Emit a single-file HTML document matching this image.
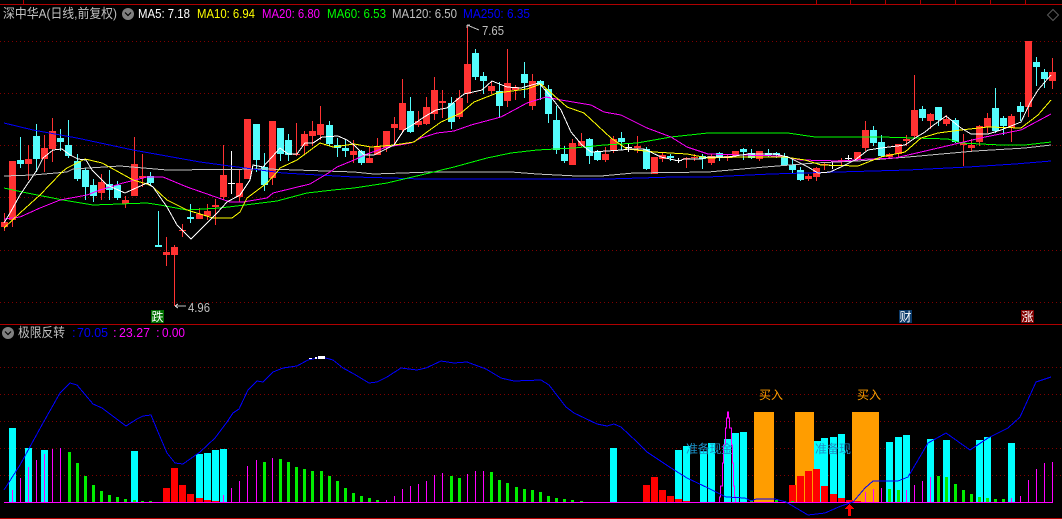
<!DOCTYPE html>
<html>
<head>
<meta charset="utf-8">
<style>
html,body{margin:0;padding:0;background:#000;width:1062px;height:519px;overflow:hidden}
svg{display:block;position:absolute;left:0;top:0}
text{font-family:"Liberation Sans","WenQuanYi Zen Hei","Noto Sans CJK SC",sans-serif;font-size:13px}
.z{font-family:"WenQuanYi Zen Hei","Noto Sans CJK SC",sans-serif;font-size:12px}
</style>
</head>
<body>
<svg width="1062" height="519" viewBox="0 0 1062 519" xmlns="http://www.w3.org/2000/svg">
<rect width="1062" height="519" fill="#000"/>
<g shape-rendering="crispEdges" fill="none">
<path d="M0 4.5H1062M23.5 0V4M816.5 0V4M850.5 0V4M885.5 0V4M920.5 0V4M955.5 0V4M990.5 0V4M1025.5 0V4M0 324.5H1062M0 518.5H1062" stroke="#b00000"/>
<path d="M0 41.5H1062M0 93.5H1062M0 145.5H1062M0 197.5H1062M0 250.5H1062M0 302.5H1062M0 367.5H1062M0 394.5H1062M0 421.5H1062M0 448.5H1062M0 475.5H1062" stroke="#800000" stroke-dasharray="1 3"/>

<!-- red wicks -->
<path stroke="#ff3232" d="M4.5 213V231M12.5 161V227M28.5 145V180M44.5 135V172M52.5 118V162M101.5 174V200M125.5 196V208M134.5 137V196M142.5 154V187M166.5 237V266M174.5 245V306M182.5 224V237M199.5 208V219M207.5 204V220M215.5 199V225M223.5 145V200M239.5 170V202M247.5 119V179M272.5 121V185M296.5 123V156M304.5 131V155M312.5 121V146M320.5 106V140M353.5 140V163M369.5 147V163M377.5 138V155M386.5 131V152M394.5 117V146M402.5 79V133M418.5 111V127M426.5 97V125M434.5 77V120M442.5 90V118M459.5 90V119M467.5 25V103M491.5 81V94M507.5 49V107M515.5 85V100M532.5 74V110M572.5 139V165M581.5 133V147M605.5 147V162M613.5 136V153M637.5 136V153M654.5 157V174M662.5 152V162M686.5 157V168M694.5 154V161M711.5 154V165M727.5 155V161M735.5 151V157M759.5 151V161M808.5 174V181M816.5 167V181M824.5 163V170M841.5 158V166M857.5 152V160M865.5 121V151M889.5 153V158M898.5 144V157M906.5 135V146M914.5 75V139M930.5 113V129M946.5 115V126M963.5 134V166M971.5 139V152M979.5 125V146M987.5 113V133M1011.5 114V142M1028.5 41V117M1052.5 58V89"/>
<!-- cyan wicks -->
<path stroke="#54fcfc" d="M20.5 137V168M36.5 124V172M60.5 129V151M68.5 120V158M77.5 154V181M85.5 168V200M93.5 179V202M109.5 170V200M117.5 181V200M150.5 172V185M158.5 211V245M190.5 204V223M256.5 124V172M264.5 153V191M280.5 128V161M288.5 134V161M329.5 121V146M337.5 138V157M345.5 140V157M361.5 150V165M410.5 97V133M451.5 97V129M475.5 49V80M483.5 72V94M499.5 82V118M524.5 62V98M540.5 80V100M548.5 85V123M556.5 106V154M564.5 146V163M589.5 138V164M597.5 150V161M621.5 132V150M646.5 147V170M670.5 154V161M702.5 154V169M719.5 152V161M743.5 148V160M751.5 149V159M768.5 149V157M776.5 152V158M784.5 153V166M792.5 158V174M800.5 167V181M873.5 126V146M881.5 135V157M922.5 106V121M938.5 107V126M955.5 118V143M995.5 88V133M1003.5 116V135M1020.5 102V121M1036.5 57V86M1044.5 69V88"/>
<!-- white crosses -->
<path stroke="#fff" d="M231.5 151V194M228 183.5H235M628.5 143V152M625 147.5H632M678.5 158V163M675 160.5H682M832.5 162V169M829 165.5H836M848.5 155V162M845 158.5H852"/>
<!-- red bodies -->
<path fill="#ff3232" d="M1 222h7v5h-7zM9 161h7v59h-7zM25 159h7v5h-7zM41 148h7v11h-7zM49 131h7v18h-7zM98 182h7v11h-7zM122 200h7v4h-7zM131 164h7v32h-7zM139 176h7v2h-7zM163 252h7v3h-7zM171 247h7v8h-7zM179 230h7v1h-7zM196 214h7v5h-7zM204 211h7v5h-7zM212 205h7v2h-7zM220 175h7v22h-7zM236 183h7v14h-7zM244 119h7v60h-7zM269 121h7v57h-7zM293 154h7v1h-7zM301 134h7v12h-7zM309 131h7v5h-7zM317 124h7v11h-7zM350 151h7v4h-7zM366 158h7v5h-7zM374 146h7v9h-7zM383 131h7v17h-7zM391 124h7v4h-7zM399 103h7v27h-7zM415 121h7v4h-7zM423 107h7v17h-7zM431 90h7v24h-7zM439 101h7v2h-7zM456 98h7v19h-7zM464 64h7v30h-7zM488 86h7v5h-7zM504 83h7v18h-7zM512 87h7v3h-7zM529 81h7v25h-7zM569 143h7v22h-7zM578 141h7v5h-7zM602 154h7v6h-7zM610 139h7v11h-7zM634 146h7v2h-7zM651 157h7v17h-7zM659 155h7v4h-7zM683 158h7v1h-7zM691 157h7v1h-7zM708 156h7v7h-7zM724 156h7v2h-7zM732 151h7v5h-7zM756 151h7v8h-7zM805 176h7v3h-7zM813 168h7v9h-7zM821 164h7v1h-7zM838 160h7v1h-7zM854 152h7v7h-7zM862 130h7v18h-7zM886 154h7v3h-7zM895 144h7v10h-7zM903 139h7v2h-7zM911 110h7v26h-7zM927 114h7v7h-7zM943 119h7v5h-7zM960 143h7v2h-7zM968 145h7v3h-7zM976 126h7v16h-7zM984 118h7v9h-7zM1008 116h7v12h-7zM1025 41h7v66h-7zM1049 72h7v9h-7z"/>
<!-- cyan bodies -->
<path fill="#54fcfc" d="M17 160h7v4h-7zM33 136h7v23h-7zM57 138h7v4h-7zM65 145h7v11h-7zM74 161h7v18h-7zM82 170h7v17h-7zM90 185h7v11h-7zM106 184h7v6h-7zM114 185h7v13h-7zM147 176h7v7h-7zM155 245h7v2h-7zM187 217h7v2h-7zM253 124h7v36h-7zM261 167h7v18h-7zM277 128h7v26h-7zM285 140h7v15h-7zM326 125h7v19h-7zM334 145h7v3h-7zM342 148h7v3h-7zM358 151h7v12h-7zM407 111h7v21h-7zM448 103h7v19h-7zM472 53h7v24h-7zM480 76h7v5h-7zM496 91h7v15h-7zM521 74h7v9h-7zM537 81h7v4h-7zM545 89h7v25h-7zM553 120h7v30h-7zM561 154h7v7h-7zM586 139h7v17h-7zM594 152h7v8h-7zM618 138h7v4h-7zM643 149h7v20h-7zM667 156h7v2h-7zM699 156h7v3h-7zM716 153h7v5h-7zM740 149h7v3h-7zM748 153h7v5h-7zM765 153h7v2h-7zM773 153h7v2h-7zM781 156h7v9h-7zM789 165h7v5h-7zM797 170h7v10h-7zM870 130h7v13h-7zM878 142h7v14h-7zM919 109h7v9h-7zM935 107h7v13h-7zM952 120h7v22h-7zM992 108h7v23h-7zM1000 118h7v8h-7zM1017 106h7v6h-7zM1033 62h7v5h-7zM1041 72h7v7h-7z"/>

<!-- MA lines -->
<polyline stroke="#c0c0c0" stroke-width="1" points="4,176 33,175 67,172 73,169 120,166 167,170 267,169 354,172 374,174 431,172 511,172 537,174 577,176 601,176 634,173 708,172 765,167 815,163 858,161 908,157 975,151 1025,148 1051,145"/>
<polyline stroke="#0000ff" stroke-width="1" points="4,123 33,130 77,138 133,150 200,162 260,170 283,173 354,177 391,178 421,179 511,179 607,179 674,177 708,177 771,174 838,172 908,170 968,167 1015,164 1051,161"/>
<polyline stroke="#00ff00" stroke-width="1" points="4,188 27,193 63,200 93,205 147,203 160,205 187,210 220,208 253,204 277,201 307,193 333,190 354,188 387,183 421,175 454,167 487,158 511,153 537,150 574,148 604,145 637,143 671,137 708,133 788,133 815,137 881,137 948,139 961,143 1001,145 1025,145 1051,142"/>
<polyline stroke="#ff00ff" stroke-width="1" points="4,219 20,217 40,208 60,200 87,195 100,190 123,183 147,177 163,177 187,187 210,195 230,202 243,202 267,198 273,193 310,184 330,172 337,167 354,160 367,154 387,147 411,143 421,138 437,133 454,131 471,125 501,117 527,103 546,97 561,100 591,105 604,112 621,115 647,128 671,137 687,147 708,154 741,155 781,156 801,160 841,161 868,159 895,158 921,152 951,145 985,137 1021,130 1051,114"/>
<polyline stroke="#ffff00" stroke-width="1" points="4,228 20,213 40,195 62,172 67,168 85,159 102,163 115,170 133,180 147,184 153,187 167,200 187,210 213,218 232,218 240,212 247,198 267,183 277,172 280,168 297,160 320,143 333,147 354,144 371,147 394,145 414,142 427,132 441,122 461,113 474,102 497,93 527,89 541,84 567,107 584,113 611,138 627,149 654,152 687,154 708,158 741,157 785,157 805,160 821,165 858,166 881,157 905,152 921,138 938,133 961,130 988,127 1021,128 1038,115 1051,100"/>
<polyline stroke="#ffffff" stroke-width="1" points="4,223 10,213 20,195 37,170 43,158 53,150 62,149 70,155 78,159 86,160 92,170 107,185 125,193 147,183 153,187 167,207 177,225 191,239 200,230 217,213 227,202 240,195 250,180 253,165 263,167 272,157 280,148 288,154 297,154 305,143 313,143 322,137 338,136 347,140 354,145 364,155 374,155 394,145 404,130 414,124 424,117 436,110 447,108 464,94 482,90 492,81 507,87 521,88 539,83 551,97 561,110 571,132 582,145 591,152 607,151 622,150 629,149 644,149 661,157 679,161 684,159 701,159 708,157 728,157 748,154 775,154 788,157 798,162 808,167 818,173 830,172 841,167 855,160 868,150 881,148 905,145 915,138 925,132 931,127 946,116 961,128 971,134 988,134 1001,130 1021,122 1030,103 1038,90 1051,75"/>

<!-- lower panel cyan -->
<path fill="#00ffff" d="M9 428h7v74h-7zM25 448h7v54h-7zM41 450h7v52h-7zM131 451h7v51h-7zM196 454h7v48h-7zM204 453h7v49h-7zM212 450h7v52h-7zM220 449h7v53h-7zM610 448h7v54h-7zM675 450h7v52h-7zM683 446h7v56h-7zM700 451h7v51h-7zM708 443h7v59h-7zM724 439h7v63h-7zM732 433h7v69h-7zM740 432h7v70h-7zM814 441h7v61h-7zM821 438h7v64h-7zM830 437h7v65h-7zM838 434h7v68h-7zM886 442h7v60h-7zM895 437h7v65h-7zM903 435h7v67h-7zM927 439h7v63h-7zM943 440h7v62h-7zM976 440h7v62h-7zM984 437h7v65h-7zM1008 443h7v59h-7z"/>
<!-- orange -->
<path fill="#ff9d00" d="M754 412h20v90h-20zM795 412h19v90h-19zM852 412h27v90h-27z"/>
<!-- red -->
<path fill="#ff0000" d="M163 488h7v14h-7zM171 468h7v34h-7zM179 485h7v17h-7zM187 494h7v8h-7zM196 498h7v4h-7zM204 500h7v2h-7zM212 501h7v1h-7zM643 485h7v17h-7zM651 477h7v25h-7zM659 490h7v12h-7zM667 496h7v6h-7zM675 499h7v3h-7zM683 501h7v1h-7zM789 485h7v17h-7zM797 476h7v26h-7zM805 471h7v31h-7zM813 469h7v33h-7zM821 486h7v16h-7zM830 494h7v8h-7zM838 498h7v4h-7zM846 500h7v2h-7zM854 501h7v1h-7z"/>
<!-- green -->
<path fill="#00ee00" d="M68 452h3v50h-3zM76 463h3v39h-3zM84 476h3v26h-3zM92 485h3v17h-3zM100 491h3v11h-3zM108 495h3v7h-3zM116 497h3v5h-3zM124 499h3v3h-3zM133 500h3v2h-3zM141 501h3v1h-3zM149 501h3v1h-3zM263 462h3v40h-3zM279 459h3v43h-3zM287 462h3v40h-3zM295 467h3v35h-3zM303 469h3v33h-3zM311 471h3v31h-3zM320 471h3v31h-3zM328 476h3v26h-3zM336 481h3v21h-3zM344 488h3v14h-3zM352 493h3v9h-3zM360 496h3v6h-3zM368 498h3v4h-3zM376 500h3v2h-3zM450 476h3v26h-3zM458 478h3v24h-3zM490 472h3v30h-3zM498 480h3v22h-3zM506 483h3v19h-3zM515 487h3v15h-3zM523 489h3v13h-3zM531 490h3v12h-3zM539 492h3v10h-3zM547 496h3v6h-3zM555 498h3v4h-3zM563 499h3v3h-3zM571 500h3v2h-3zM580 501h3v1h-3zM750 500h3v2h-3zM775 500h3v2h-3zM783 501h3v1h-3zM791 501h3v1h-3zM888 489h3v13h-3zM897 490h3v12h-3zM937 476h3v26h-3zM945 477h3v25h-3zM954 484h3v18h-3zM962 490h3v12h-3zM970 494h3v8h-3zM978 497h3v5h-3zM986 498h3v4h-3zM994 499h3v3h-3zM1002 499h3v3h-3z"/>
<!-- magenta -->
<path stroke="#ff00ff" d="M12.5 490V502M20.5 478V502M28.5 467V502M36.5 460V502M44.5 454V502M52.5 449V502M60.5 448V502M223.5 495V502M231.5 488V502M239.5 481V502M247.5 466V502M256.5 460V502M272.5 458V502M386.5 500V502M394.5 496V502M402.5 489V502M410.5 486V502M418.5 484V502M426.5 481V502M434.5 475V502M442.5 473V502M467.5 474V502M475.5 471V502M483.5 471V502M865.5 492V502M873.5 489V502M881.5 488V502M906.5 490V502M914.5 485V502M922.5 481V502M930.5 477V502M1011.5 498V502M1020.5 496V502M1028.5 480V502M1036.5 469V502M1044.5 463V502M1052.5 462V502"/>
<path stroke="#ff00ff" d="M719.5 502V497H720.5V486H722.5V463H723.5V445H725.5V428H726.5V418H727.5V412H728.5V418H729.5V428H731.5V445H732.5V463H733.5V486H734.5V497H735.5V502"/>
<path stroke="#ff00ff" d="M4 502.5H1053"/>
<!-- blue line lower -->
<polyline stroke="#0000ff" stroke-width="1" points="4,490 20,465 43,423 60,393 70,383 77,385 93,404 102,408 126,426 137,419 143,416 151,415 158,432 167,453 175,463 183,464 200,452 215,438 227,422 233,413 239,409 248,390 257,381 263,382 273,372 283,368 297,366 308,360 322,357 333,360 343,368 354,374 369,383 377,382 387,377 401,368 417,370 426,368 441,361 454,363 467,362 486,369 501,378 514,381 541,380 549,385 566,407 574,413 597,424 607,426 614,424 621,427 637,442 647,452 671,468 687,478 708,488 726,497 745,498 751,501 756,499 775,499 786,502 808,515 825,513 841,506 853,502 865,488 873,481 898,481 908,477 928,443 946,433 970,450 988,438 1008,428 1020,417 1036,382 1051,377"/>
<path fill="#fff" d="M309 358h3v1h-3zM315 357h2v2h-2zM318 356h7v3h-7z"/>
<!-- red arrow -->
<path fill="#ff0000" d="M848 508h3v8h-3zM849 504h1v1h-1zM848 505h3v1h-3zM847 506h5v1h-5zM846 507h7v1h-7zM845 508h9v1h-9z"/>
<!-- label boxes -->
<rect x="151" y="310" width="13" height="13" fill="#007000"/>
<rect x="899" y="310" width="13" height="13" fill="#0a3a6a"/>
<rect x="1021" y="310" width="13" height="13" fill="#800000"/>
<!-- extreme arrows -->
<path stroke="#c0c0c0" d="M467 25L479 30M467 25h3M467 25v3M175 306H186M175 306l3 -2M175 306l3 2"/>
</g>

<!-- diamond -->
<path d="M1053 9.5L1058.5 15L1053 20.5L1047.5 15Z" fill="none" stroke="#5a5a5a"/>

<!-- title -->
<text x="3" y="18" fill="#c0c0c0" textLength="114" lengthAdjust="spacingAndGlyphs">深中华A(日线,前复权)</text>
<circle cx="128" cy="14" r="6" fill="#808080"/>
<path d="M125 12.5L128 15.5L131 12.5" fill="none" stroke="#000" stroke-width="1.2"/>
<text x="138" y="18" fill="#fff" textLength="52" lengthAdjust="spacingAndGlyphs">MA5: 7.18</text>
<text x="197" y="18" fill="#ffff00" textLength="58" lengthAdjust="spacingAndGlyphs">MA10: 6.94</text>
<text x="262" y="18" fill="#ff00ff" textLength="58" lengthAdjust="spacingAndGlyphs">MA20: 6.80</text>
<text x="327" y="18" fill="#00ff00" textLength="59" lengthAdjust="spacingAndGlyphs">MA60: 6.53</text>
<text x="392" y="18" fill="#c0c0c0" textLength="65" lengthAdjust="spacingAndGlyphs">MA120: 6.50</text>
<text x="463" y="18" fill="#0000ff" textLength="67" lengthAdjust="spacingAndGlyphs">MA250: 6.35</text>

<text x="482" y="35" fill="#c0c0c0" textLength="22" lengthAdjust="spacingAndGlyphs">7.65</text>
<text x="188" y="312" fill="#c0c0c0" textLength="22" lengthAdjust="spacingAndGlyphs">4.96</text>

<text class="z" x="151.5" y="321" fill="#fff">跌</text>
<text class="z" x="899.5" y="321" fill="#fff">财</text>
<text class="z" x="1021.5" y="321" fill="#fff">涨</text>

<!-- lower title -->
<circle cx="8" cy="333" r="6" fill="#808080"/>
<path d="M5 331.5L8 334.5L11 331.5" fill="none" stroke="#000" stroke-width="1.2"/>
<text x="18" y="337" fill="#c0c0c0" textLength="47" lengthAdjust="spacingAndGlyphs">极限反转</text>
<text x="72" y="337" fill="#0000ff">:</text>
<text x="77" y="337" fill="#0000ff" textLength="31" lengthAdjust="spacingAndGlyphs">70.05</text>
<text x="113" y="337" fill="#ff00ff">:</text>
<text x="119" y="337" fill="#ff00ff" textLength="31" lengthAdjust="spacingAndGlyphs">23.27</text>
<text x="156" y="337" fill="#ff00ff">:</text>
<text x="162" y="337" fill="#ff00ff" textLength="23" lengthAdjust="spacingAndGlyphs">0.00</text>

<text x="759" y="399" fill="#ff9d00" class="z">买入</text>
<text x="857" y="399" fill="#ff9d00" class="z">买入</text>
<text x="686" y="453" fill="#1c92c8" class="z" textLength="47">准备现金</text>
<text x="815" y="453" fill="#1c92c8" class="z" textLength="36">准备现</text>
</svg>
</body>
</html>
